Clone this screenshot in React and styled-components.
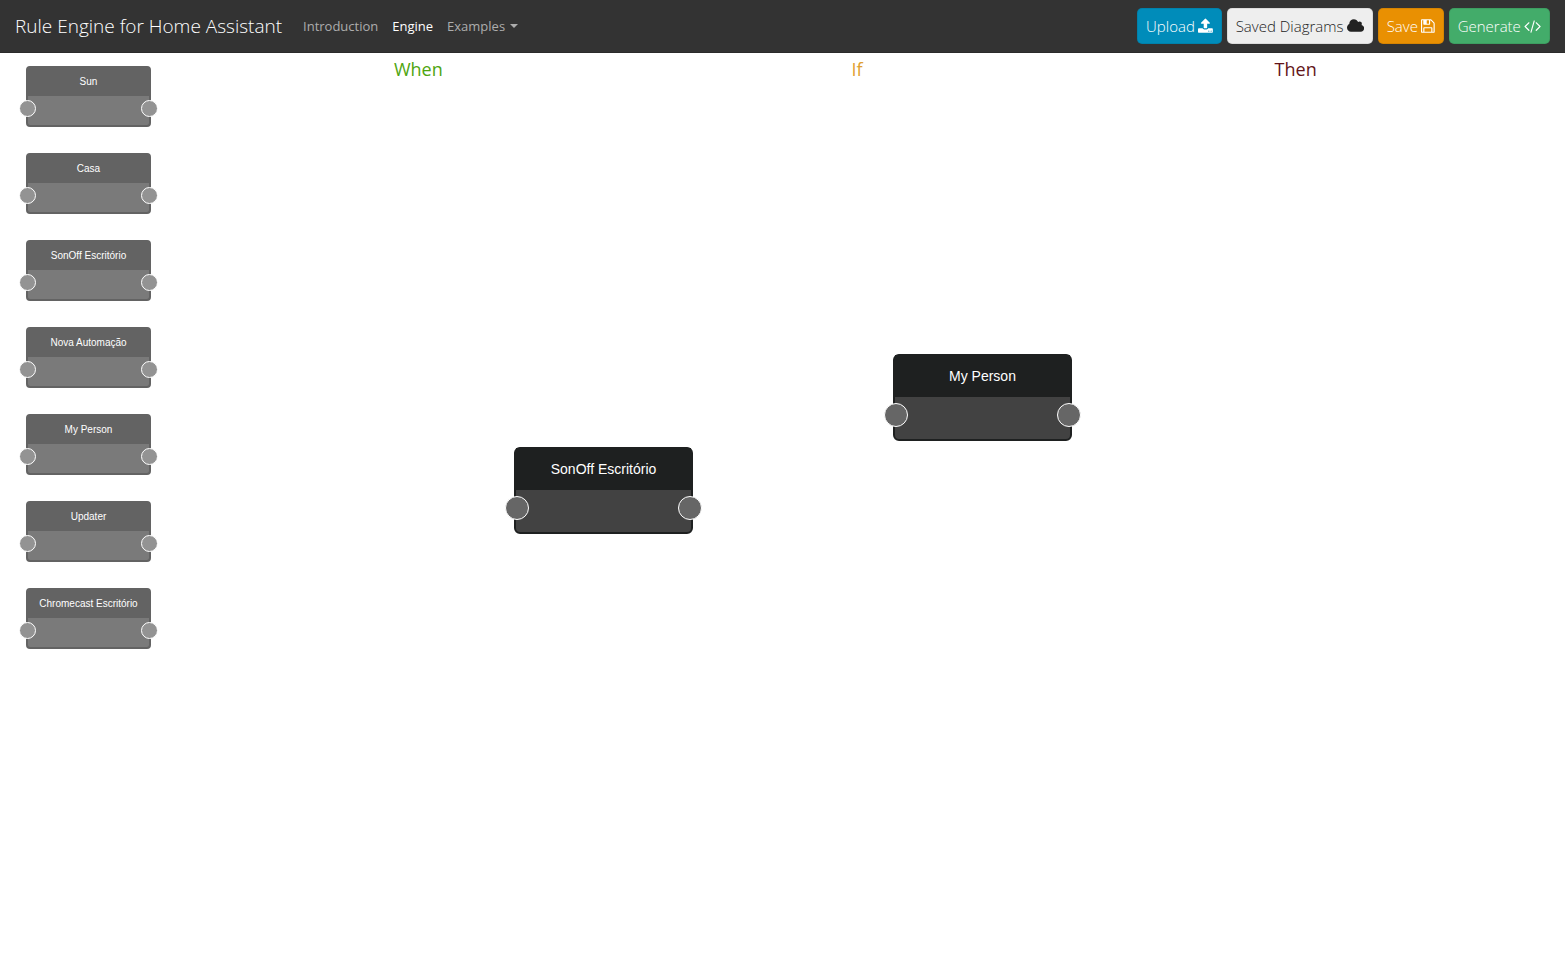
import React from "react";
import styled, { createGlobalStyle, css } from "styled-components";

const GlobalStyle = createGlobalStyle`
  *, *::before, *::after { box-sizing: border-box; }
  body {
    margin: 0;
    background: #fff;
    color: #222;
    font-family: "Open Sans", sans-serif;
    font-size: 15px;
  }
`;

const Page = styled.div`
  min-height: 100vh;
  display: flex;
  flex-direction: column;
`;

const Navbar = styled.header`
  display: flex;
  align-items: center;
  padding: 8px 15px;
  background: #333;
  border-bottom: 1px solid #2b2b2b;
`;

const Brand = styled.a`
  margin-right: 14px;
  color: #fff;
  font-size: 19px;
  font-weight: 300;
  line-height: 28px;
  text-decoration: none;
  white-space: nowrap;
`;

const NavLinks = styled.nav`
  display: flex;
  flex: 1;
`;

const NavLink = styled.a`
  display: flex;
  align-items: center;
  gap: 5px;
  padding: 8px 7px;
  color: ${({ $active }) => ($active ? "#fff" : "#adadad")};
  font-size: 13px;
  line-height: 20px;
  text-decoration: none;
`;

const Caret = styled.span`
  border: 4px solid transparent;
  border-top-color: currentColor;
  border-bottom: 0;
`;

const Actions = styled.div`
  display: flex;
  gap: 5px;
`;

const tones = {
  info: ["#008cba", "#fff"],
  light: ["#eee", "#222"],
  warning: ["#e99002", "#fff"],
  success: ["#43ac6a", "#fff"],
};

const ActionButton = styled.button`
  display: flex;
  align-items: center;
  gap: 3px;
  height: 36px;
  padding: 0 8px;
  border: 1px solid rgba(0, 0, 0, 0.08);
  border-radius: 5px;
  background: ${({ $tone }) => tones[$tone][0]};
  color: ${({ $tone }) => tones[$tone][1]};
  font-family: inherit;
  font-size: 15px;
  font-weight: 300;
  line-height: 24px;
  white-space: nowrap;
  cursor: pointer;
`;

const Glyph = styled.svg`
  display: block;
  height: 16px;
  fill: currentColor;
`;

const Workspace = styled.main`
  display: flex;
  flex: 1;
`;

const Palette = styled.ul`
  display: flex;
  flex-direction: column;
  gap: 26px;
  width: 199px;
  margin: 0;
  padding: 13px 26px;
  list-style: none;
`;

const Canvas = styled.section`
  position: relative;
  flex: 1;
  padding-right: 50px;
`;

const Columns = styled.div`
  display: grid;
  grid-template-columns: repeat(3, 1fr);
`;

const ColumnTitle = styled.h2`
  margin: 4px 0 0;
  color: ${({ $color }) => $color};
  font-size: 18px;
  font-weight: 400;
  line-height: 25px;
  text-align: center;
`;

const smallNode = css`
  --port: 17px;
  --frame: #222;
  width: 125px;
  height: 61px;
  border-radius: 4px;
  opacity: 0.7;
`;

const largeNode = css`
  --port: 24px;
  --frame: #1e2020;
  width: 179px;
  height: 87px;
  border-radius: 6px;
`;

const NodeBox = styled.div`
  position: relative;
  display: flex;
  flex-direction: column;
  ${({ $small }) => ($small ? smallNode : largeNode)}
  border: solid var(--frame);
  border-width: 1px 2px 2px;
  background: #424242;
`;

const NodeTitle = styled.div`
  height: ${({ $small }) => ($small ? 29 : 42)}px;
  background: var(--frame);
  color: #fff;
  font-family: "Liberation Sans", Arial, sans-serif;
  font-size: ${({ $small }) => ($small ? 10 : 14)}px;
  line-height: ${({ $small }) => ($small ? 29 : 42)}px;
  text-align: center;
  white-space: nowrap;
`;

const Port = styled.span`
  position: absolute;
  top: ${({ $small }) => ($small ? 33 : 48)}px;
  ${({ $side }) => $side}: ${({ $small }) => ($small ? -9 : -11)}px;
  width: var(--port);
  height: var(--port);
  border: 1px solid #fff;
  border-radius: 50%;
  background: #666;
`;

const Placed = styled.div`
  position: absolute;
  left: ${({ $x }) => $x}px;
  top: ${({ $y }) => $y}px;
`;

const icons = {
  upload: {
    box: "0 0 1664 1792",
    d: "M1280 1472q0-26-19-45t-45-19-45 19-19 45 19 45 45 19 45-19 19-45zm256 0q0-26-19-45t-45-19-45 19-19 45 19 45 45 19 45-19 19-45zm128-224v320q0 40-28 68t-68 28h-1472q-40 0-68-28t-28-68v-320q0-40 28-68t68-28h427q21 56 70.5 92t110.5 36h256q61 0 110.5-36t70.5-92h427q40 0 68 28t28 68zm-325-648q-17 40-59 40h-256v448q0 26-19 45t-45 19h-256q-26 0-45-19t-19-45v-448h-256q-42 0-59-40-17-39 14-69l448-448q18-19 45-19t45 19l448 448q31 30 14 69z",
  },
  cloud: {
    box: "64 0 1920 1792",
    d: "M1984 1152q0 159-112.5 271.5t-271.5 112.5h-1088q-185 0-316.5-131.5t-131.5-316.5q0-132 71-241.5t187-163.5q-2-28-2-43 0-212 150-362t362-150q158 0 286.5 88t187.5 230q70-62 166-62 106 0 181 75t75 181q0 75-41 138 129 30 213 134.5t84 239.5z",
  },
  floppy: {
    box: "128 0 1536 1792",
    d: "M512 1536h768v-384h-768v384zm896 0h128v-896q0-14-10-38.5t-20-34.5l-281-281q-10-10-34-20t-39-10v416q0 40-28 68t-68 28h-576q-40 0-68-28t-28-68v-416h-128v1280h128v-416q0-40 28-68t68-28h832q40 0 68 28t28 68v416zm-384-928v-320q0-13-9.5-22.5t-22.5-9.5h-192q-13 0-22.5 9.5t-9.5 22.5v320q0 13 9.5 22.5t22.5 9.5h192q13 0 22.5-9.5t9.5-22.5zm640 32v928q0 40-28 68t-68 28h-1344q-40 0-68-28t-28-68v-1344q0-40 28-68t68-28h928q40 0 88 20t76 48l280 280q28 28 48 76t20 88z",
  },
  code: {
    box: "64 0 1920 1792",
    d: "M681 1399l-50 50q-10 10-23 10t-23-10l-466-466q-10-10-10-23t10-23l466-466q10-10 23-10t23 10l50 50q10 10 10 23t-10 23l-393 393 393 393q10 10 10 23t-10 23zm591-1067l-373 1291q-4 13-15.5 19.5t-23.5 2.5l-62-17q-13-4-19.5-15.5t-2.5-24.5l373-1291q4-13 15.5-19.5t23.5-2.5l62 17q13 4 19.5 15.5t2.5 24.5zm657 651l-466 466q-10 10-23 10t-23-10l-50-50q-10-10-10-23t10-23l393-393-393-393q-10-10-10-23t10-23l50-50q10-10 23-10t23 10l466 466q10 10 10 23t-10 23z",
  },
};

const actions = [
  { label: "Upload", tone: "info", icon: "upload" },
  { label: "Saved Diagrams", tone: "light", icon: "cloud" },
  { label: "Save", tone: "warning", icon: "floppy" },
  { label: "Generate", tone: "success", icon: "code" },
];

const devices = [
  "Sun",
  "Casa",
  "SonOff Escritório",
  "Nova Automação",
  "My Person",
  "Updater",
  "Chromecast Escritório",
];

const placedNodes = [
  { name: "SonOff Escritório", x: 315, y: 394 },
  { name: "My Person", x: 694, y: 301 },
];

function Node({ name, small }) {
  return (
    <NodeBox $small={small}>
      <NodeTitle $small={small}>{name}</NodeTitle>
      <Port $small={small} $side="left" />
      <Port $small={small} $side="right" />
    </NodeBox>
  );
}

export default function App() {
  return (
    <Page>
      <GlobalStyle />
      <Navbar>
        <Brand href="#">Rule Engine for Home Assistant</Brand>
        <NavLinks>
          <NavLink href="#introduction">Introduction</NavLink>
          <NavLink href="#engine" $active aria-current="page">
            Engine
          </NavLink>
          <NavLink href="#examples">
            Examples
            <Caret />
          </NavLink>
        </NavLinks>
        <Actions>
          {actions.map(({ label, tone, icon }) => (
            <ActionButton key={label} type="button" $tone={tone}>
              {label}
              <Glyph viewBox={icons[icon].box} aria-hidden="true">
                <path d={icons[icon].d} />
              </Glyph>
            </ActionButton>
          ))}
        </Actions>
      </Navbar>
      <Workspace>
        <Palette>
          {devices.map((name) => (
            <li key={name}>
              <Node name={name} small />
            </li>
          ))}
        </Palette>
        <Canvas>
          <Columns>
            <ColumnTitle $color="#4ea50f">When</ColumnTitle>
            <ColumnTitle $color="#e0a030">If</ColumnTitle>
            <ColumnTitle $color="#621418">Then</ColumnTitle>
          </Columns>
          {placedNodes.map(({ name, x, y }) => (
            <Placed key={name} $x={x} $y={y}>
              <Node name={name} />
            </Placed>
          ))}
        </Canvas>
      </Workspace>
    </Page>
  );
}
